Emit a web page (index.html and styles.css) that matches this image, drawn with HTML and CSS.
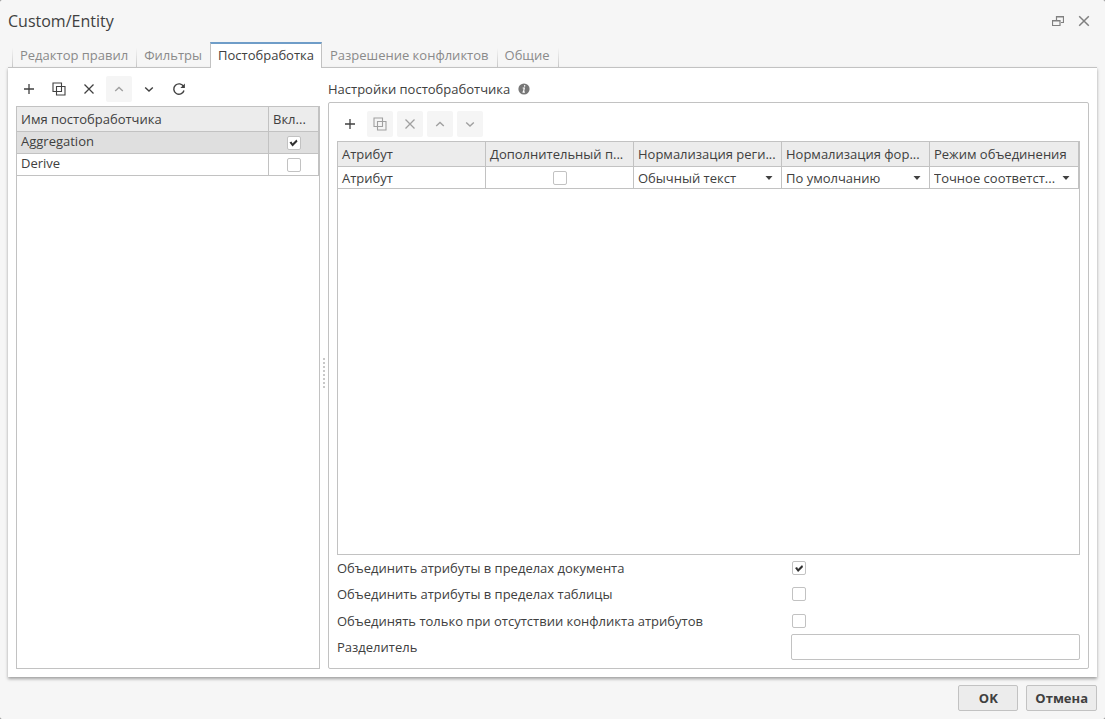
FILE: index.html
```html
<!DOCTYPE html>
<html lang="ru">
<head>
<meta charset="utf-8">
<title>Custom/Entity</title>
<link rel="stylesheet" href="styles.css">
</head>
<body>
<svg class="sprite" aria-hidden="true">
  <symbol id="i-plus" viewBox="0 0 16 16"><path d="M8 3v10M3 8h10" fill="none" stroke="currentColor" stroke-width="1.3"/></symbol>
  <symbol id="i-copy" viewBox="0 0 16 16"><path d="M2 2h8.500v8.500H2zM5.500 5.500H14V14H5.500z" fill="none" stroke="currentColor" stroke-width="1.1"/></symbol>
  <symbol id="i-x" viewBox="0 0 16 16"><path d="M3.500 3.500l9 9M12.500 3.500l-9 9" fill="none" stroke="currentColor" stroke-width="1.3"/></symbol>
  <symbol id="i-up" viewBox="0 0 16 16"><path d="M4.200 10L8 6.500l3.800 3.500" fill="none" stroke="currentColor" stroke-width="1.4"/></symbol>
  <symbol id="i-down" viewBox="0 0 16 16"><path d="M4.200 6.500L8 10l3.800-3.500" fill="none" stroke="currentColor" stroke-width="1.4"/></symbol>
  <symbol id="i-refresh" viewBox="0 0 16 16"><path d="M12.600 5.600A5.200 5.200 0 1 0 13 9.500" fill="none" stroke="currentColor" stroke-width="1.4"/><path d="M13.900 2.500v4.500H9.400z" fill="currentColor"/></symbol>
  <symbol id="i-caret" viewBox="0 0 8 8"><path d="M.5 2h7L4 6z" fill="currentColor"/></symbol>
</svg>
<div class="dialog">
  <header class="titlebar">
    <h1 class="title">Custom/Entity</h1>
    <button class="window-btn" type="button" aria-label="Восстановить">
      <svg viewBox="0 0 12 12"><path d="M4.500 5V1.500h7v6H9M4 2h8M.5 5.500h7.500v5H.5zM0 6h8.500" fill="none" stroke="currentColor" stroke-width="1.2"/></svg>
    </button>
    <button class="window-btn" type="button" aria-label="Закрыть">
      <svg viewBox="0 0 12 12"><path d="M1.200 1.200l9.600 9.600M10.800 1.200l-9.600 9.600" fill="none" stroke="currentColor" stroke-width="1.5"/></svg>
    </button>
  </header>
  <nav class="tabs" role="tablist">
    <button class="tab" type="button" role="tab">Редактор правил</button>
    <button class="tab" type="button" role="tab">Фильтры</button>
    <button class="tab tab-active" type="button" role="tab" aria-selected="true">Постобработка</button>
    <button class="tab" type="button" role="tab">Разрешение конфликтов</button>
    <button class="tab" type="button" role="tab">Общие</button>
  </nav>
  <main class="panel">
    <section class="processors">
      <div class="toolbar">
        <button class="tool" type="button" aria-label="Добавить"><svg><use href="#i-plus"/></svg></button>
        <button class="tool" type="button" aria-label="Копировать"><svg><use href="#i-copy"/></svg></button>
        <button class="tool" type="button" aria-label="Удалить"><svg><use href="#i-x"/></svg></button>
        <button class="tool" type="button" aria-label="Вверх" disabled><svg><use href="#i-up"/></svg></button>
        <button class="tool" type="button" aria-label="Вниз"><svg><use href="#i-down"/></svg></button>
        <button class="tool" type="button" aria-label="Обновить"><svg><use href="#i-refresh"/></svg></button>
      </div>
      <div class="grid-box">
        <table class="grid">
          <colgroup><col><col class="col-enabled"></colgroup>
          <thead><tr><th>Имя постобработчика</th><th>Вкл...</th></tr></thead>
          <tbody>
            <tr class="selected"><td class="name">Aggregation</td><td class="center"><input class="check" type="checkbox" aria-label="Aggregation" checked></td></tr>
            <tr><td class="name">Derive</td><td class="center"><input class="check" type="checkbox" aria-label="Derive"></td></tr>
          </tbody>
        </table>
      </div>
    </section>
    <div class="splitter" role="separator" aria-orientation="vertical"><span class="grip"></span></div>
    <section class="settings">
      <h2 class="settings-title">Настройки постобработчика
        <svg class="info" viewBox="0 0 12 12"><circle cx="6" cy="6" r="5.600" fill="currentColor"/><path d="M6.800 2.200l-.3 1.400M4.700 5h1.600l-.9 4.300M4.500 9.200h2.400" fill="none" stroke="#fff" stroke-width="1.200"/></svg>
      </h2>
      <div class="settings-box">
        <div class="toolbar">
          <button class="tool" type="button" aria-label="Добавить"><svg><use href="#i-plus"/></svg></button>
          <button class="tool" type="button" aria-label="Копировать" disabled><svg><use href="#i-copy"/></svg></button>
          <button class="tool" type="button" aria-label="Удалить" disabled><svg><use href="#i-x"/></svg></button>
          <button class="tool" type="button" aria-label="Вверх" disabled><svg><use href="#i-up"/></svg></button>
          <button class="tool" type="button" aria-label="Вниз" disabled><svg><use href="#i-down"/></svg></button>
        </div>
        <div class="grid-box">
          <table class="grid">
            <colgroup><col class="col-setting" span="4"><col></colgroup>
            <thead><tr><th>Атрибут</th><th>Дополнительный п...</th><th>Нормализация реги...</th><th>Нормализация фор...</th><th>Режим объединения</th></tr></thead>
            <tbody>
              <tr>
                <td>Атрибут</td>
                <td class="center"><input class="check" type="checkbox" aria-label="Дополнительный"></td>
                <td><div class="combo"><select aria-label="Нормализация регистра"><option>Обычный текст</option></select><svg><use href="#i-caret"/></svg></div></td>
                <td><div class="combo"><select aria-label="Нормализация формы"><option>По умолчанию</option></select><svg><use href="#i-caret"/></svg></div></td>
                <td><div class="combo"><select aria-label="Режим объединения"><option>Точное соответст...</option></select><svg><use href="#i-caret"/></svg></div></td>
              </tr>
            </tbody>
          </table>
        </div>
        <div class="options">
          <label for="merge-doc">Объединить атрибуты в пределах документа</label>
          <input class="check" id="merge-doc" type="checkbox" checked>
          <label for="merge-table">Объединить атрибуты в пределах таблицы</label>
          <input class="check" id="merge-table" type="checkbox">
          <label for="merge-conflict">Объединять только при отсутствии конфликта атрибутов</label>
          <input class="check" id="merge-conflict" type="checkbox">
          <label for="separator">Разделитель</label>
          <input class="text" id="separator" type="text">
        </div>
      </div>
    </section>
  </main>
  <footer class="footer">
    <button class="action" type="button">OK</button>
    <button class="action" type="button">Отмена</button>
  </footer>
</div>
</body>
</html>
```
FILE: styles.css
```css
*, *::before, *::after { box-sizing: border-box; }

:root {
  --line: #c2c2c2;
  --text: #404040;
  --muted: #8a8a8a;
}

body {
  margin: 0;
  background: #808080;
  color: var(--text);
  font: 13px/18px "Open Sans", "Noto Sans", sans-serif;
}

button, input, select { font: inherit; color: inherit; }
button { border: 0; background: none; padding: 0; }
h1, h2 { margin: 0; font-weight: 400; }

.sprite { display: none; }

.dialog {
  display: flex;
  flex-direction: column;
  min-height: 100vh;
  background: #f6f6f6;
  border-radius: 2px;
}

.titlebar {
  display: flex;
  align-items: center;
  gap: 14px;
  height: 42px;
  padding: 0 15px 0 8px;
}
.title { flex: 1; font-size: 16px; line-height: 24px; }
.window-btn { display: flex; color: #808080; }
.window-btn svg { width: 12px; height: 12px; }

.tabs {
  display: flex;
  height: 26px;
  padding: 0 12px;
  margin-bottom: -1px;
  z-index: 1;
}
.tab {
  position: relative;
  padding: 0 8px 0 7px;
  color: var(--muted);
  border-right: 1px solid;
  border-image: linear-gradient(transparent 25%, var(--line)) 1;
}
.tab:first-child { border-left: 1px solid; }
.tab:nth-child(2) { border-right: 0; }
.tab-active {
  padding: 0 7px 2px;
  color: var(--text);
  background: #fff;
  border: 1px solid var(--line);
  border-top: 2px solid #6f9dc8;
  border-bottom: 0;
  border-image: none;
}
.tab-active + .tab { padding-left: 8px; }

.panel {
  flex: 1;
  display: flex;
  margin: 0 8px;
  padding: 8px;
  background: #fff;
  border-top: 1px solid var(--line);
  box-shadow: 0 2px 3px rgba(0, 0, 0, .35);
}

.processors { display: flex; flex-direction: column; width: 304px; }

.toolbar { display: flex; gap: 4px; margin-bottom: 4px; }
.tool {
  display: flex;
  align-items: center;
  justify-content: center;
  width: 26px;
  height: 26px;
  border-radius: 2px;
}
.tool svg { width: 16px; height: 16px; }
.tool:disabled { background: #f5f5f5; color: #a0a0a0; }

.grid-box { flex: 1; border: 1px solid var(--line); }
.grid {
  width: 100%;
  table-layout: fixed;
  border-collapse: separate;
  border-spacing: 0;
}
.col-enabled { width: 50px; }
.col-setting { width: 148px; }
.grid th, .grid td {
  padding: 0 4px;
  border-right: 1px solid var(--line);
  border-bottom: 1px solid var(--line);
  text-align: left;
  font-weight: 400;
  white-space: nowrap;
  overflow: hidden;
}
.grid th { height: 25px; background: #ececec; }
.grid td { height: 22px; }
.grid .name { vertical-align: top; }
.grid .center { text-align: center; }
.center .check { display: block; margin: 0 auto; }
.selected { background: #dfdfdf; }

.check {
  appearance: none;
  width: 14px;
  height: 14px;
  margin: 0;
  background: #fff;
  border: 1px solid var(--line);
  border-radius: 2px;
}
.check:checked::before {
  content: "";
  display: block;
  height: 12px;
  background: #303030;
  clip-path: polygon(2px 6px, 4px 5px, 5px 7px, 9px 3px, 10px 5px, 5px 10px);
}

.combo { display: flex; align-items: center; }
.combo select {
  appearance: none;
  flex: 1;
  min-width: 0;
  height: 20px;
  padding: 0;
  border: 0;
  background: none;
}
.combo svg { width: 8px; height: 8px; margin: 0 4px; }

.splitter { display: flex; align-items: center; width: 8px; padding-left: 3px; }
.grip {
  width: 2px;
  height: 30px;
  background: repeating-linear-gradient(#c8c8c8 0 2px, transparent 2px 4px);
}

.settings { flex: 1; min-width: 0; display: flex; flex-direction: column; }
.settings-title {
  display: flex;
  align-items: center;
  gap: 8px;
  height: 26px;
  font-size: 13px;
}
.info { width: 12px; height: 12px; color: #777; }
.settings-box {
  flex: 1;
  display: flex;
  flex-direction: column;
  padding: 8px;
  border: 1px solid var(--line);
  border-radius: 2px;
}

.options {
  display: grid;
  grid-template-columns: 11fr 7fr;
  grid-template-rows: 26px 26px 27px 26px;
  align-items: center;
}
.options .check { margin-left: 1px; }
.text {
  width: 100%;
  height: 26px;
  padding: 0 4px;
  background: #fff;
  border: 1px solid var(--line);
  border-radius: 2px;
}

.footer {
  display: flex;
  justify-content: flex-end;
  gap: 8px;
  padding: 8px;
}
.action {
  min-width: 60px;
  height: 26px;
  padding: 0 8px;
  background: #ececec;
  border: 1px solid var(--line);
  border-radius: 2px;
  font-weight: 700;
}
```
